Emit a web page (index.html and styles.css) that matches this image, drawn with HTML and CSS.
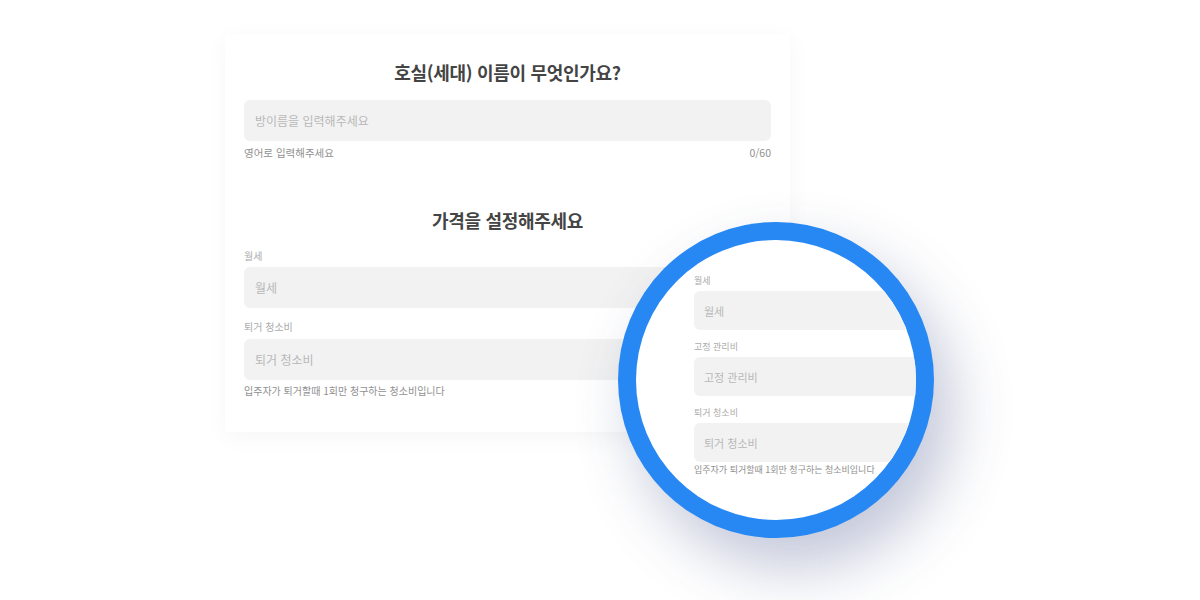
FILE: index.html
```html
<!DOCTYPE html>
<html lang="ko">
<head>
<meta charset="utf-8">
<link rel="stylesheet" href="styles.css">
</head>
<body>
<div class="stage">
  <div class="card">
    <h2 class="title">호실(세대) 이름이 무엇인가요?</h2>
    <div class="input">방이름을 입력해주세요</div>
    <div class="helper-row"><span>영어로 입력해주세요</span><span>0/60</span></div>
    <h2 class="title title2">가격을 설정해주세요</h2>
    <div class="label">월세</div>
    <div class="input">월세</div>
    <div class="label label-next">퇴거 청소비</div>
    <div class="input">퇴거 청소비</div>
    <div class="note">입주자가 퇴거할때 1회만 청구하는 청소비입니다</div>
  </div>

  <div class="lens">
    <div class="lens-inner">
      <div class="lens-content">
        <div class="z-label">월세</div>
        <div class="z-input">월세</div>
        <div class="z-label z-next">고정 관리비</div>
        <div class="z-input">고정 관리비</div>
        <div class="z-label z-next">퇴거 청소비</div>
        <div class="z-input">퇴거 청소비</div>
        <div class="z-note">입주자가 퇴거할때 1회만 청구하는 청소비입니다</div>
      </div>
    </div>
  </div>
</div>
</body>
</html>
```

FILE: styles.css
```css
* { box-sizing: border-box; }
html, body { margin: 0; padding: 0; background: #fff; }
body { font-family: "Noto Sans CJK KR", "Noto Sans", sans-serif; }

.stage {
  position: relative;
  width: 1200px;
  height: 600px;
  overflow: hidden;
  padding-top: 34px;
  padding-left: 225px;
}

.card {
  width: 565px;
  height: 398px;
  background: #fff;
  padding: 25px 19px 0 19px;
  box-shadow: 0 5px 22px rgba(0, 0, 0, 0.04);
}

.title {
  margin: 0 0 15px;
  text-align: center;
  font-size: 18px;
  line-height: 26px;
  font-weight: 700;
  color: #444;
  letter-spacing: -0.3px;
}
.title2 { margin-top: 46px; margin-bottom: 16px; }

.input {
  height: 41px;
  border-radius: 6px;
  background: #f2f2f2;
  padding-left: 11px;
  display: flex;
  align-items: center;
  font-size: 12px;
  color: #b8b8b8;
}

.helper-row {
  margin-top: 4px;
  display: flex;
  justify-content: space-between;
  font-size: 10.5px;
  line-height: 16px;
  color: #909090;
}

.label {
  font-size: 10px;
  line-height: 14px;
  color: #ababab;
  margin-bottom: 4px;
}
.label-next { margin-top: 12px; margin-bottom: 5px; }

.note {
  margin-top: 4px;
  font-size: 10px;
  line-height: 14px;
  color: #909090;
}

.lens {
  position: absolute;
  left: 618px;
  top: 222px;
  width: 316px;
  height: 316px;
  border-radius: 50%;
  background: #2788f3;
  padding: 18px;
  box-shadow: 18px 30px 60px rgba(55, 70, 130, 0.3);
}
.lens-inner {
  width: 100%;
  height: 100%;
  border-radius: 50%;
  background: #fff;
  overflow: hidden;
  position: relative;
}
.lens-content {
  position: absolute;
  left: 58px;
  top: 35px;
  width: 300px;
}
.z-label {
  font-size: 9px;
  line-height: 12px;
  color: #ababab;
  margin-bottom: 4px;
}
.z-next { margin-top: 11px; }
.z-input {
  height: 39px;
  border-radius: 6px;
  background: #f2f2f2;
  padding-left: 10px;
  display: flex;
  align-items: center;
  font-size: 11px;
  color: #b8b8b8;
}
.z-note {
  margin-top: 2px;
  font-size: 9px;
  line-height: 12px;
  color: #909090;
}
```
